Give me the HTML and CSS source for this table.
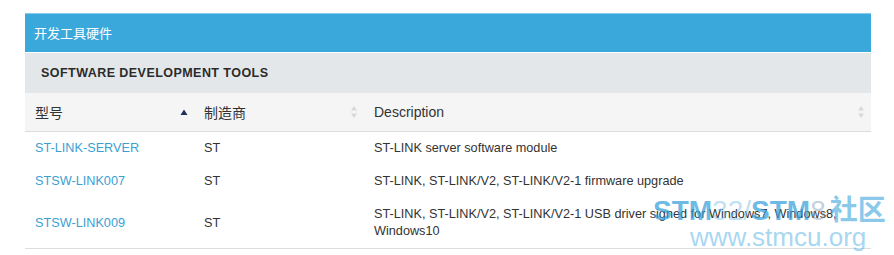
FILE: index.html
```html
<!DOCTYPE html>
<html lang="zh">
<head>
<meta charset="utf-8">
<title>开发工具硬件</title>
<link rel="stylesheet" href="styles.css">
</head>
<body>
<div class="panel">
  <div class="panel-heading"><span class="ph-text">开发工具硬件</span></div>
  <div class="section-title">SOFTWARE DEVELOPMENT TOOLS</div>
  <table class="grid">
    <colgroup>
      <col class="c1"><col class="c2"><col class="c3">
    </colgroup>
    <thead>
      <tr>
        <th><div class="th-in"><span>型号</span>
          <svg class="sort" width="8" height="8" viewBox="0 0 8 8"><path d="M4 1.5 L7.5 7 L0.5 7 Z" fill="#1c2f5e"/></svg></div></th>
        <th><div class="th-in"><span>制造商</span>
          <svg class="sort" width="8" height="14" viewBox="0 0 8 14"><path d="M4 1 L7 5.5 L1 5.5 Z M4 13 L7 8.5 L1 8.5 Z" fill="#d9d9d9"/></svg></div></th>
        <th><div class="th-in"><span>Description</span>
          <svg class="sort" width="8" height="14" viewBox="0 0 8 14"><path d="M4 1 L7 5.5 L1 5.5 Z M4 13 L7 8.5 L1 8.5 Z" fill="#d9d9d9"/></svg></div></th>
      </tr>
    </thead>
    <tbody>
      <tr>
        <td><a href="#">ST-LINK-SERVER</a></td>
        <td>ST</td>
        <td>ST-LINK server software module</td>
      </tr>
      <tr>
        <td><a href="#">STSW-LINK007</a></td>
        <td>ST</td>
        <td>ST-LINK, ST-LINK/V2, ST-LINK/V2-1 firmware upgrade</td>
      </tr>
      <tr>
        <td><a href="#">STSW-LINK009</a></td>
        <td>ST</td>
        <td>ST-LINK, ST-LINK/V2, ST-LINK/V2-1 USB driver signed for Windows7, Windows8, Windows10</td>
      </tr>
    </tbody>
  </table>
</div>
<div class="watermark">
  <div class="wm-line1"><b>STM</b><span class="lt">32/</span><b>STM</b><span class="lt2">8</span><span class="cn">社区</span></div>
  <div class="wm-line2">www.stmcu.org</div>
</div>
</body>
</html>
```

FILE: styles.css
```css
html, body {
  margin: 0;
  padding: 0;
  background: #ffffff;
}
body {
  padding: 13px 23px 0 25px;
  font-family: "Liberation Sans", Arial, "Noto Sans CJK SC", sans-serif;
  color: #333333;
  position: relative;
  height: 242px;
  overflow: hidden;
}
.panel {
  width: 846px;
}
.panel-heading {
  background: #3ba8db;
  border-top: 1px solid #86cdee;
  height: 39px;
  box-sizing: border-box;
  display: flex;
  align-items: center;
  padding-left: 9px;
  color: #ffffff;
  font-size: 13px;
  font-family: "Noto Sans CJK SC", "Liberation Sans", sans-serif;
}
.ph-text {
  line-height: 13px;
  margin-top: -2px;
}
.section-title {
  background: #e4e7ea;
  height: 40px;
  margin-top: 1px;
  box-sizing: border-box;
  display: flex;
  align-items: center;
  padding-left: 16px;
  font-size: 12.5px;
  font-weight: bold;
  letter-spacing: 0.45px;
  color: #2b2b2b;
}
.grid {
  width: 100%;
  border-collapse: collapse;
  table-layout: fixed;
  font-size: 12.7px;
}
.c1 { width: 169px; }
.c2 { width: 170px; }
.grid th {
  background: #f5f5f5;
  height: 38px;
  padding: 0 6px 0 10px;
  text-align: left;
  font-weight: normal;
  font-size: 14px;
  color: #333333;
  border-bottom: 1px solid #dddddd;
}
.th-in {
  display: flex;
  align-items: center;
  justify-content: space-between;
}
.th-in span {
  font-family: "Liberation Sans", "Noto Sans CJK SC", sans-serif;
}
.sort {
  display: block;
}
.grid td {
  padding: 8px 10px;
  line-height: 17px;
  vertical-align: middle;
  color: #333333;
}
.grid tbody tr:last-child td {
  border-bottom: 1px solid #dddddd;
}
.grid a {
  color: #3a9fd2;
  text-decoration: none;
}
.watermark {
  position: absolute;
  left: 653px;
  top: 194px;
  pointer-events: none;
}
.wm-line1 {
  font-size: 28px;
  line-height: 28px;
  white-space: nowrap;
  color: rgba(52, 160, 218, 0.72);
}
.wm-line1 b {
  font-weight: bold;
}
.wm-line1 .lt {
  color: rgba(110, 185, 228, 0.45);
}
.wm-line1 .lt2 {
  color: rgba(120, 150, 175, 0.45);
}
.wm-line1 .cn {
  font-family: "Noto Sans CJK SC", sans-serif;
  font-weight: bold;
  color: rgba(60, 165, 222, 0.62);
  margin-left: 4px;
}
.wm-line2 {
  font-size: 26px;
  line-height: 24px;
  margin-left: 37px;
  color: rgba(90, 180, 230, 0.55);
  white-space: nowrap;
}
```
